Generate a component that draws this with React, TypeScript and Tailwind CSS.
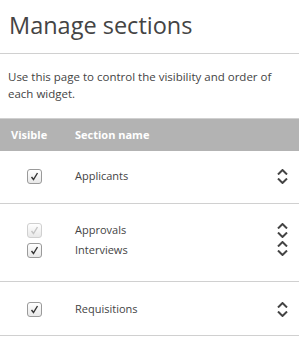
import React from 'react';

type Section = { name: string; disabled?: boolean };

const groups: Section[][] = [
  [{ name: 'Applicants' }],
  [{ name: 'Approvals', disabled: true }, { name: 'Interviews' }],
  [{ name: 'Requisitions' }],
];

const CheckBox: React.FC<{ disabled?: boolean }> = ({ disabled }) => (
  <span
    className={`flex h-[15px] w-[15px] items-center justify-center rounded-[3px] border bg-gradient-to-b from-white to-[#e8e8e8] ${
      disabled ? 'border-[#d0d0d0]' : 'border-[#9a9a9a]'
    }`}
  >
    <svg width="9" height="9" viewBox="0 0 9 9">
      <path
        d="M1.5 5 L3.5 7.5 L7.5 1"
        fill="none"
        stroke={disabled ? '#c4c4c4' : '#333'}
        strokeWidth="1.4"
      />
    </svg>
  </span>
);

const Arrows: React.FC = () => (
  <div className="flex flex-col items-center gap-[3px]">
    <svg width="11" height="6" viewBox="0 0 11 6">
      <path d="M1 5.5 L5.5 1 L10 5.5" fill="none" stroke="#444" strokeWidth="2" />
    </svg>
    <svg width="11" height="6" viewBox="0 0 11 6">
      <path d="M1 0.5 L5.5 5 L10 0.5" fill="none" stroke="#444" strokeWidth="2" />
    </svg>
  </div>
);

export default function App() {
  return (
    <div className="h-[346px] w-[299px] overflow-hidden bg-white text-[#444]" style={{ fontFamily: '"Open Sans", sans-serif' }}>
      {/* Title */}
      <h1 className="h-[54px] border-b border-[#d0d0d0] pl-[9px] pt-[8px] text-[23.5px] leading-[34px] text-[#444]">
        Manage sections
      </h1>

      <p className="h-[64px] w-[278px] pl-[8px] pt-[15px] text-[11.5px] leading-[16.5px]">
        Use this page to control the visibility and order of each widget.
      </p>

      {/* Header */}
      <div className="flex h-[33px] items-center border-t border-[#d0d0d0] bg-[#b3b3b3] text-[11px] font-bold text-white">
        <span className="w-[75px] pl-[11px]">Visible</span>
        <span>Section name</span>
      </div>

      {groups.map((group, i) => (
        <div
          key={i}
          className={`flex border-b border-[#d0d0d0] ${
            i === 0 ? 'pt-[18px] pb-[19px]' : i === 1 ? 'pt-[19px] pb-[23px]' : 'pt-[20px] pb-[18px]'
          }`}
        >
          <div className="flex flex-1 flex-col gap-[5px]">
            {group.map(s => (
              <div key={s.name} className="flex h-[15px] items-center">
                <span className="flex w-[75px] justify-center pr-[6px]">
                  <CheckBox disabled={s.disabled} />
                </span>
                <span className="text-[11px]">{s.name}</span>
              </div>
            ))}
          </div>
          <div className="flex w-[24px] flex-col items-center gap-[3px] pr-[10px]">
            {group.map(s => (
              <Arrows key={s.name} />
            ))}
          </div>
        </div>
      ))}
    </div>
  );
}
